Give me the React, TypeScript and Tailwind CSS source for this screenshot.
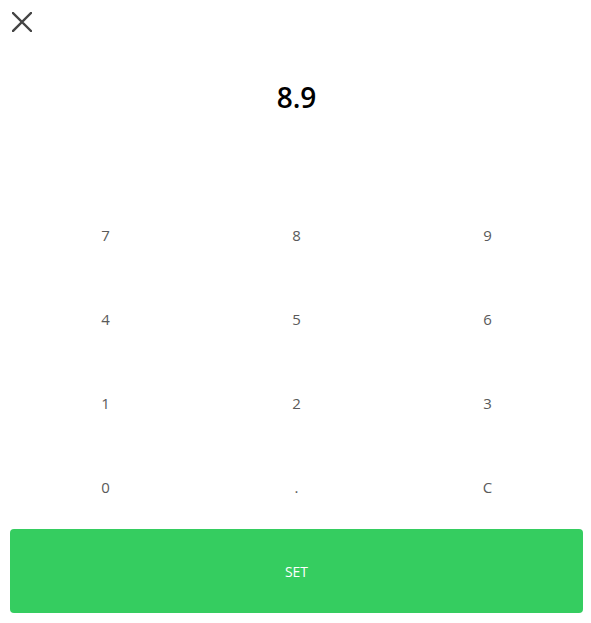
const keys = ["7", "8", "9", "4", "5", "6", "1", "2", "3", "0", ".", "C"];

export default function App() {
  return (
    <div
      className="flex h-[623px] w-full flex-col bg-white pb-[10px] pl-[10px] pr-[8px]"
      style={{ fontFamily: '"Open Sans", sans-serif' }}
    >
      <div className="h-[44px] pl-[2px] pt-[12px]">
        <button className="block">
          <svg width="20" height="20" viewBox="0 0 20 20">
            <path
              d="M1 1L19 19M19 1L1 19"
              stroke="#444"
              strokeWidth="2.4"
              strokeLinecap="square"
            />
          </svg>
        </button>
      </div>

      <div className="flex h-[106px] items-center justify-center text-[28px] font-semibold text-black">
        8.9
      </div>

      <div className="h-[43px]" />

      <div className="grid grid-cols-3">
        {keys.map((k) => (
          <button
            key={k}
            className="flex h-[84px] items-center justify-center text-[15px] text-[#5a5a5a]"
          >
            {k}
          </button>
        ))}
      </div>

      <button className="h-[84px] w-full rounded bg-[#35cd60] text-[14px] font-medium text-white">
        SET
      </button>
    </div>
  );
}
